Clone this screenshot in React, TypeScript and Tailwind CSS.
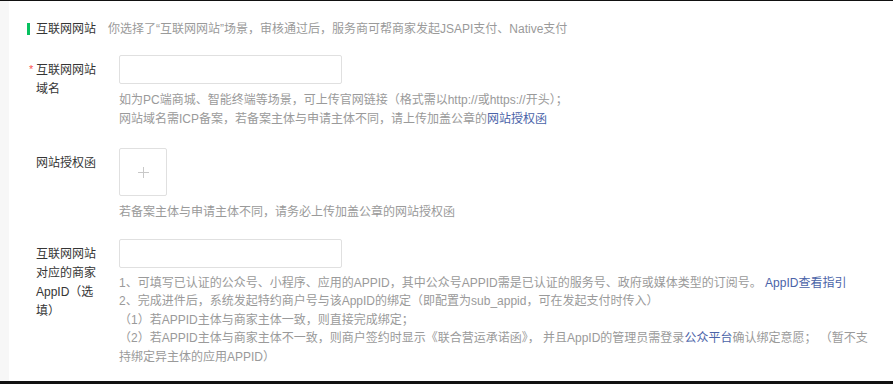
import React from "react";

const font = { fontFamily: '"Liberation Sans", "Noto Sans CJK SC", sans-serif' };

const Label = ({ required, children }: { required?: boolean; children: React.ReactNode }) => (
  <div className="flex w-[91px] shrink-0 pt-[6px] pl-[20px]">
    <span className="w-[7px] shrink-0 text-[11px] leading-[16px] text-[#fa5151]">{required ? "*" : ""}</span>
    <span className="w-[64px] shrink-0 text-[12px] leading-[19px] text-[#353535]">{children}</span>
  </div>
);

const Help = ({ children }: { children: React.ReactNode }) => (
  <div className="w-[754px] text-[12px] leading-[18.5px] text-[#9a9a9a]">{children}</div>
);

const Link = ({ children }: { children: React.ReactNode }) => (
  <span className="text-[#4a63a8] cursor-pointer">{children}</span>
);

export default function App() {
  return (
    <div className="flex h-[384px] w-full flex-col bg-white" style={font}>
      <div className="h-px bg-[#111]" />
      <div className="flex flex-1">
        {/* left gutter */}
        <div className="w-[9px] shrink-0 bg-[#f7f7f7]" />
        <div className="flex-1">
          {/* Section title */}
          <div className="mt-[20px] flex items-center pl-[18px]">
            <span className="h-[12px] w-[3px] bg-[#07c160]" />
            <span className="ml-[6px] text-[12px] leading-[16px] text-[#353535]">互联网网站</span>
            <span className="ml-[12px] text-[12px] leading-[16px] text-[#9a9a9a]">
              你选择了“互联网网站”场景，审核通过后，服务商可帮商家发起JSAPI支付、Native支付
            </span>
          </div>

          {/* Domain */}
          <div className="mt-[18px] flex">
            <Label required>互联网网站域名</Label>
            <div className="pl-[19px]">
              <input className="h-[29px] w-[223px] rounded-[2px] border border-[#e0e0e0] outline-none" />
              <div className="mt-[7px]">
                <Help>
                  <p>如为PC端商城、智能终端等场景，可上传官网链接（格式需以http://或https://开头）；</p>
                  <p>
                    网站域名需ICP备案，若备案主体与申请主体不同，请上传加盖公章的<Link>网站授权函</Link>
                  </p>
                </Help>
              </div>
            </div>
          </div>

          {/* Authorization letter */}
          <div className="mt-[20px] flex">
            <Label>网站授权函</Label>
            <div className="pl-[19px]">
              <div className="flex h-[48px] w-[48px] items-center justify-center rounded-[2px] border border-[#e0e0e0]">
                <svg width="11" height="11" viewBox="0 0 11 11">
                  <path d="M5.5 0v11M0 5.5h11" stroke="#c8c8c8" strokeWidth="1" />
                </svg>
              </div>
              <div className="mt-[7px]">
                <Help>
                  <p>若备案主体与申请主体不同，请务必上传加盖公章的网站授权函</p>
                </Help>
              </div>
            </div>
          </div>

          {/* AppID */}
          <div className="mt-[17px] flex">
            <Label>互联网网站对应的商家AppID（选填）</Label>
            <div className="pl-[19px]">
              <input className="h-[29px] w-[223px] rounded-[2px] border border-[#e0e0e0] outline-none" />
              <div className="mt-[6px]">
                <Help>
                  <p>
                    1、可填写已认证的公众号、小程序、应用的APPID，其中公众号APPID需是已认证的服务号、政府或媒体类型的订阅号。 <Link>AppID查看指引</Link>
                  </p>
                  <p>2、完成进件后，系统发起特约商户号与该AppID的绑定（即配置为sub_appid，可在发起支付时传入）</p>
                  <p>（1）若APPID主体与商家主体一致，则直接完成绑定；</p>
                  <p>
                    （2）若APPID主体与商家主体不一致，则商户签约时显示《联合营运承诺函》， 并且AppID的管理员需登录<Link>公众平台</Link>确认绑定意愿； （暂不支
                    <br />
                    持绑定异主体的应用APPID）
                  </p>
                </Help>
              </div>
            </div>
          </div>
        </div>
      </div>
      <div className="h-[3px] bg-[#111]" />
    </div>
  );
}
